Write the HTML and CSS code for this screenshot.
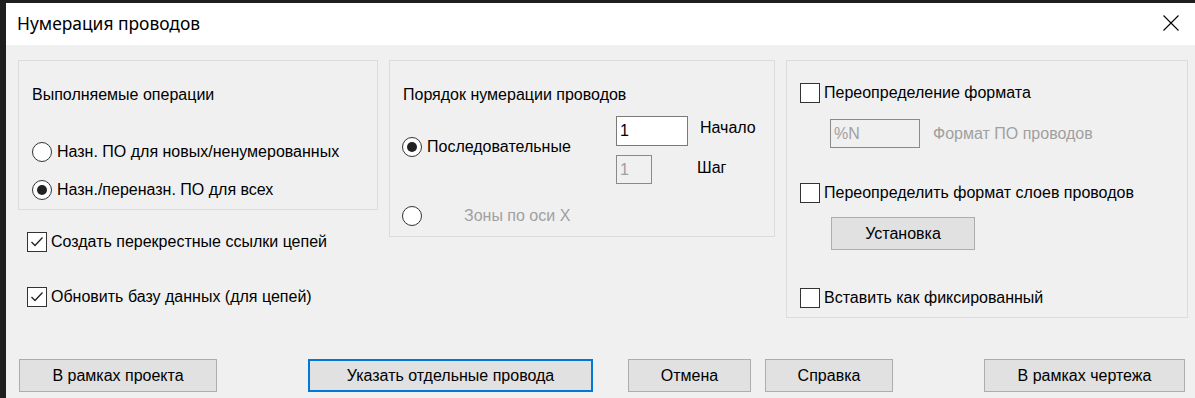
FILE: index.html
```html
<!DOCTYPE html>
<html lang="ru">
<head>
  <meta charset="UTF-8">
  <meta name="viewport" content="width=device-width, initial-scale=1.0">
  <title>Нумерация проводов</title>
  <link rel="stylesheet" href="styles.css">
</head>
<body>
  <div class="desktop">
    <div class="window">
      <!-- Title bar -->
      <div class="titlebar">
        <span class="title">Нумерация проводов</span>
        <svg class="close" width="16" height="16" viewBox="0 0 16 16">
          <path d="M0.5 0.5 L15.5 15.5 M15.5 0.5 L0.5 15.5" stroke="#000" stroke-width="1.1" fill="none"/>
        </svg>
      </div>

      <div class="content">
        <div class="groups">
          <!-- Left column -->
          <div class="col-left">
            <div class="group group-ops">
              <div class="row group-title">Выполняемые операции</div>
              <div class="row radio-row first">
                <span class="radio"></span>
                <span>Назн. ПО для новых/ненумерованных</span>
              </div>
              <div class="row radio-row second">
                <span class="radio checked"></span>
                <span>Назн./переназн. ПО для всех</span>
              </div>
            </div>
            <div class="row check-row cross-refs">
              <span class="checkbox checked">
                <svg width="18" height="18" viewBox="0 0 18 18"><path d="M3.5 9 L7 12.5 L14.5 4.5" stroke="#222" stroke-width="1.3" fill="none"/></svg>
              </span>
              <span>Создать перекрестные ссылки цепей</span>
            </div>
            <div class="row check-row update-db">
              <span class="checkbox checked">
                <svg width="18" height="18" viewBox="0 0 18 18"><path d="M3.5 9 L7 12.5 L14.5 4.5" stroke="#222" stroke-width="1.3" fill="none"/></svg>
              </span>
              <span>Обновить базу данных (для цепей)</span>
            </div>
          </div>

          <!-- Middle group -->
          <div class="group group-order">
            <div class="row group-title">Порядок нумерации проводов</div>
            <div class="seq">
              <div class="row radio-row seq-radio">
                <span class="radio checked"></span>
                <span>Последовательные</span>
              </div>
              <div class="fields">
                <div class="field field-start">
                  <span class="textbox wide">1</span>
                  <span class="field-label">Начало</span>
                </div>
                <div class="field field-step">
                  <span class="textbox narrow disabled">1</span>
                  <span class="field-label">Шаг</span>
                </div>
              </div>
            </div>
            <div class="row radio-row zones">
              <span class="radio"></span>
              <span class="muted zones-label">Зоны по оси X</span>
            </div>
          </div>

          <!-- Right group -->
          <div class="group group-format">
            <div class="row check-row">
              <span class="checkbox"></span>
              <span>Переопределение формата</span>
            </div>
            <div class="format-row">
              <span class="textbox format disabled">%N</span>
              <span class="muted">Формат ПО проводов</span>
            </div>
            <div class="row check-row layers">
              <span class="checkbox"></span>
              <span>Переопределить формат слоев проводов</span>
            </div>
            <button class="btn setup">Установка</button>
            <div class="row check-row fixed">
              <span class="checkbox"></span>
              <span>Вставить как фиксированный</span>
            </div>
          </div>
        </div>

        <!-- Bottom buttons -->
        <div class="buttons">
          <button class="btn b-project">В рамках проекта</button>
          <button class="btn b-pick default">Указать отдельные провода</button>
          <button class="btn b-cancel">Отмена</button>
          <button class="btn b-help">Справка</button>
          <button class="btn b-drawing">В рамках чертежа</button>
        </div>
      </div>
    </div>
  </div>
</body>
</html>
```

FILE: styles.css
```css
* {
  box-sizing: border-box;
}

body {
  margin: 0;
  padding: 0;
  background-color: #1f1f1f;
  font-family: "Liberation Sans", Arial, sans-serif;
  font-size: 16px;
  color: #000;
  overflow: hidden;
}

.desktop {
  height: 398px;
  padding: 3px 0 0 6px;
  background-color: #1f1f1f;
}

.window {
  height: 395px;
  background-color: #f0f0f0;
}

.titlebar {
  height: 42px;
  background-color: #fff;
  display: flex;
  align-items: center;
  justify-content: space-between;
  padding: 0 11px 0 11px;
}

.title {
  font-family: "Noto Sans", "Open Sans", sans-serif;
  font-size: 17.4px;
  margin-top: -2px;
}

.close {
  margin-right: 5px;
  margin-top: -2px;
}

.content {
  padding: 15px 0 0 12px;
}

.groups {
  display: flex;
  align-items: flex-start;
  gap: 11px;
}

.group {
  border: 1px solid #dcdcdc;
}

.row {
  display: flex;
  align-items: center;
  height: 20px;
  white-space: nowrap;
}

.group-title {
  margin-top: 24px;
}

/* radios and checkboxes */
.radio {
  width: 20px;
  height: 20px;
  border: 1px solid #333;
  border-radius: 50%;
  background-color: #fff;
  margin-right: 5px;
  display: flex;
  align-items: center;
  justify-content: center;
  flex-shrink: 0;
}

.radio.checked::after {
  content: "";
  width: 10px;
  height: 10px;
  border-radius: 50%;
  background-color: #222;
}

.checkbox {
  width: 20px;
  height: 20px;
  border: 1px solid #333;
  background-color: #fff;
  margin-right: 4px;
  display: flex;
  align-items: center;
  justify-content: center;
  flex-shrink: 0;
}

/* left column */
.col-left {
  width: 360px;
}

.group-ops {
  height: 150px;
  padding-left: 13px;
}

.group-ops .first {
  margin-top: 37px;
}

.group-ops .second {
  margin-top: 18px;
}

.cross-refs {
  margin: 22px 0 0 9px;
}

.update-db {
  margin: 35px 0 0 9px;
}

/* middle group */
.group-order {
  width: 386px;
  height: 177px;
  padding-left: 12px;
}

.group-order .group-title {
  padding-left: 1px;
}

.seq {
  display: flex;
  margin-top: 11px;
}

.seq-radio {
  width: 214px;
  margin-top: 21px;
}

.fields {
  display: flex;
  flex-direction: column;
  gap: 9px;
}

.field {
  display: flex;
  align-items: center;
}

.textbox {
  display: flex;
  align-items: center;
  height: 30px;
  padding-left: 3px;
  background-color: #fff;
  border: 1px solid #7a7a7a;
}

.textbox.wide {
  width: 72px;
}

.textbox.narrow {
  width: 36px;
  height: 29px;
}

.textbox.disabled {
  background-color: #f0f0f0;
  border-color: #8a8a8a;
  color: #a0a0a0;
}

.field-start .field-label {
  margin-left: 12px;
  margin-top: -6px;
}

.field-step .field-label {
  margin-left: 45px;
  margin-top: -3px;
}

.zones {
  margin-top: 22px;
}

.zones-label {
  margin-left: 37px;
}

.muted {
  color: #a0a0a0;
}

/* right group */
.group-format {
  width: 402px;
  height: 258px;
  padding-left: 13px;
}

.group-format .check-row:first-child {
  margin-top: 22px;
}

.format-row {
  display: flex;
  align-items: center;
  margin: 16px 0 0 30px;
}

.textbox.format {
  width: 90px;
  height: 29px;
  margin-right: 13px;
}

.layers {
  margin-top: 35px;
}

.setup {
  display: block;
  width: 144px;
  margin: 14px 0 0 31px;
}

.fixed {
  margin-top: 38px;
}

/* buttons */
.btn {
  height: 33px;
  font-family: "Liberation Sans", Arial, sans-serif;
  font-size: 16px;
  color: #000;
  background-color: #e1e1e1;
  border: 1px solid #adadad;
  padding: 0;
}

.btn.default {
  border: 2px solid #0078d7;
}

.buttons {
  display: flex;
  margin-top: 41px;
  padding-left: 1px;
}

.b-project {
  width: 198px;
}

.b-pick {
  width: 285px;
  margin-left: 91px;
}

.b-cancel {
  width: 123px;
  margin-left: 35px;
}

.b-help {
  width: 128px;
  margin-left: 14px;
}

.b-drawing {
  width: 201px;
  margin-left: 91px;
}
```
